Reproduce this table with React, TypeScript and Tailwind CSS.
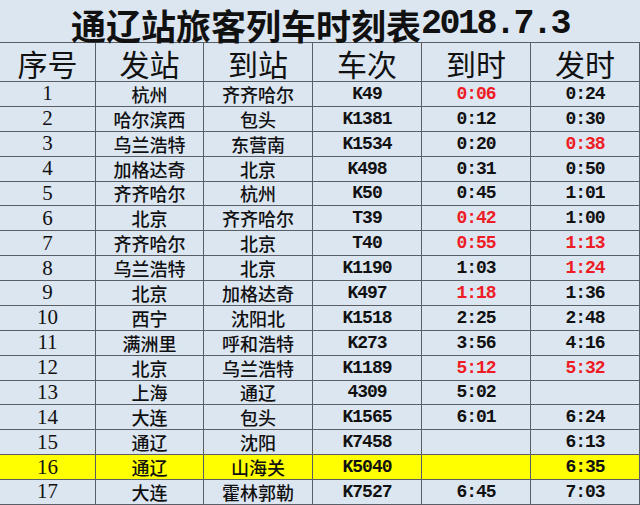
type Row = {
  no: number;
  from: string;
  to: string;
  train: string;
  arr: string;
  dep: string;
  arrRed?: boolean;
  depRed?: boolean;
  hl?: boolean;
};

const ROWS: Row[] = [
  { no: 1, from: "杭州", to: "齐齐哈尔", train: "K49", arr: "0:06", dep: "0:24", arrRed: true },
  { no: 2, from: "哈尔滨西", to: "包头", train: "K1381", arr: "0:12", dep: "0:30" },
  { no: 3, from: "乌兰浩特", to: "东营南", train: "K1534", arr: "0:20", dep: "0:38", depRed: true },
  { no: 4, from: "加格达奇", to: "北京", train: "K498", arr: "0:31", dep: "0:50" },
  { no: 5, from: "齐齐哈尔", to: "杭州", train: "K50", arr: "0:45", dep: "1:01" },
  { no: 6, from: "北京", to: "齐齐哈尔", train: "T39", arr: "0:42", dep: "1:00", arrRed: true },
  { no: 7, from: "齐齐哈尔", to: "北京", train: "T40", arr: "0:55", dep: "1:13", arrRed: true, depRed: true },
  { no: 8, from: "乌兰浩特", to: "北京", train: "K1190", arr: "1:03", dep: "1:24", depRed: true },
  { no: 9, from: "北京", to: "加格达奇", train: "K497", arr: "1:18", dep: "1:36", arrRed: true },
  { no: 10, from: "西宁", to: "沈阳北", train: "K1518", arr: "2:25", dep: "2:48" },
  { no: 11, from: "满洲里", to: "呼和浩特", train: "K273", arr: "3:56", dep: "4:16" },
  { no: 12, from: "北京", to: "乌兰浩特", train: "K1189", arr: "5:12", dep: "5:32", arrRed: true, depRed: true },
  { no: 13, from: "上海", to: "通辽", train: "4309", arr: "5:02", dep: "" },
  { no: 14, from: "大连", to: "包头", train: "K1565", arr: "6:01", dep: "6:24" },
  { no: 15, from: "通辽", to: "沈阳", train: "K7458", arr: "", dep: "6:13" },
  { no: 16, from: "通辽", to: "山海关", train: "K5040", arr: "", dep: "6:35", hl: true },
  { no: 17, from: "大连", to: "霍林郭勒", train: "K7527", arr: "6:45", dep: "7:03" },
];

const COLS = "grid grid-cols-[96px_108px_109px_109px_109px_109px]";
const CELL = "flex items-center justify-center border-r border-[#5a5f66]";
const CJK = "font-['Noto_Sans_CJK_SC',sans-serif]";
const MONO = "font-['Liberation_Mono',monospace] text-[18px] font-bold tracking-[-1px]";

const HEADERS = ["序号", "发站", "到站", "车次", "到时", "发时"];

export default function App() {
  return (
    <div className="w-[640px] h-[505px] bg-[#dce6f1] flex flex-col text-[#111] overflow-hidden">
      {/* title */}
      <div className="h-[43px] shrink-0 border-b border-[#5a5f66] flex items-center justify-center pt-[7px]">
        <span className={`${CJK} text-[35px] font-bold leading-none`}>通辽站旅客列车时刻表</span>
        <span className="font-['Liberation_Mono',monospace] text-[35px] font-bold leading-none tracking-[-2.5px]">
          2018.7.3
        </span>
      </div>

      {/* header */}
      <div className={`${COLS} h-[39px] shrink-0 border-b border-[#5a5f66]`}>
        {HEADERS.map((h) => (
          <div key={h} className={`${CELL} ${CJK} text-[30px] leading-none pt-[2px]`}>
            {h}
          </div>
        ))}
      </div>

      {/* rows */}
      <div className="flex-1 flex flex-col">
        {ROWS.map((r) => (
          <div
            key={r.no}
            className={`${COLS} flex-1 border-b border-[#5a5f66] ${r.hl ? "bg-[#ffff00]" : ""}`}
          >
            <div className={`${CELL} font-['Liberation_Serif',serif] text-[21px] leading-none`}>{r.no}</div>
            <div className={`${CELL} ${CJK} text-[18px] font-medium leading-none`}>{r.from}</div>
            <div className={`${CELL} ${CJK} text-[18px] font-medium leading-none`}>{r.to}</div>
            <div className={`${CELL} ${MONO} leading-none`}>{r.train}</div>
            <div className={`${CELL} ${MONO} leading-none ${r.arrRed ? "text-[#ee1c25]" : ""}`}>{r.arr}</div>
            <div className={`${CELL} ${MONO} leading-none ${r.depRed ? "text-[#ee1c25]" : ""}`}>{r.dep}</div>
          </div>
        ))}
      </div>
    </div>
  );
}
